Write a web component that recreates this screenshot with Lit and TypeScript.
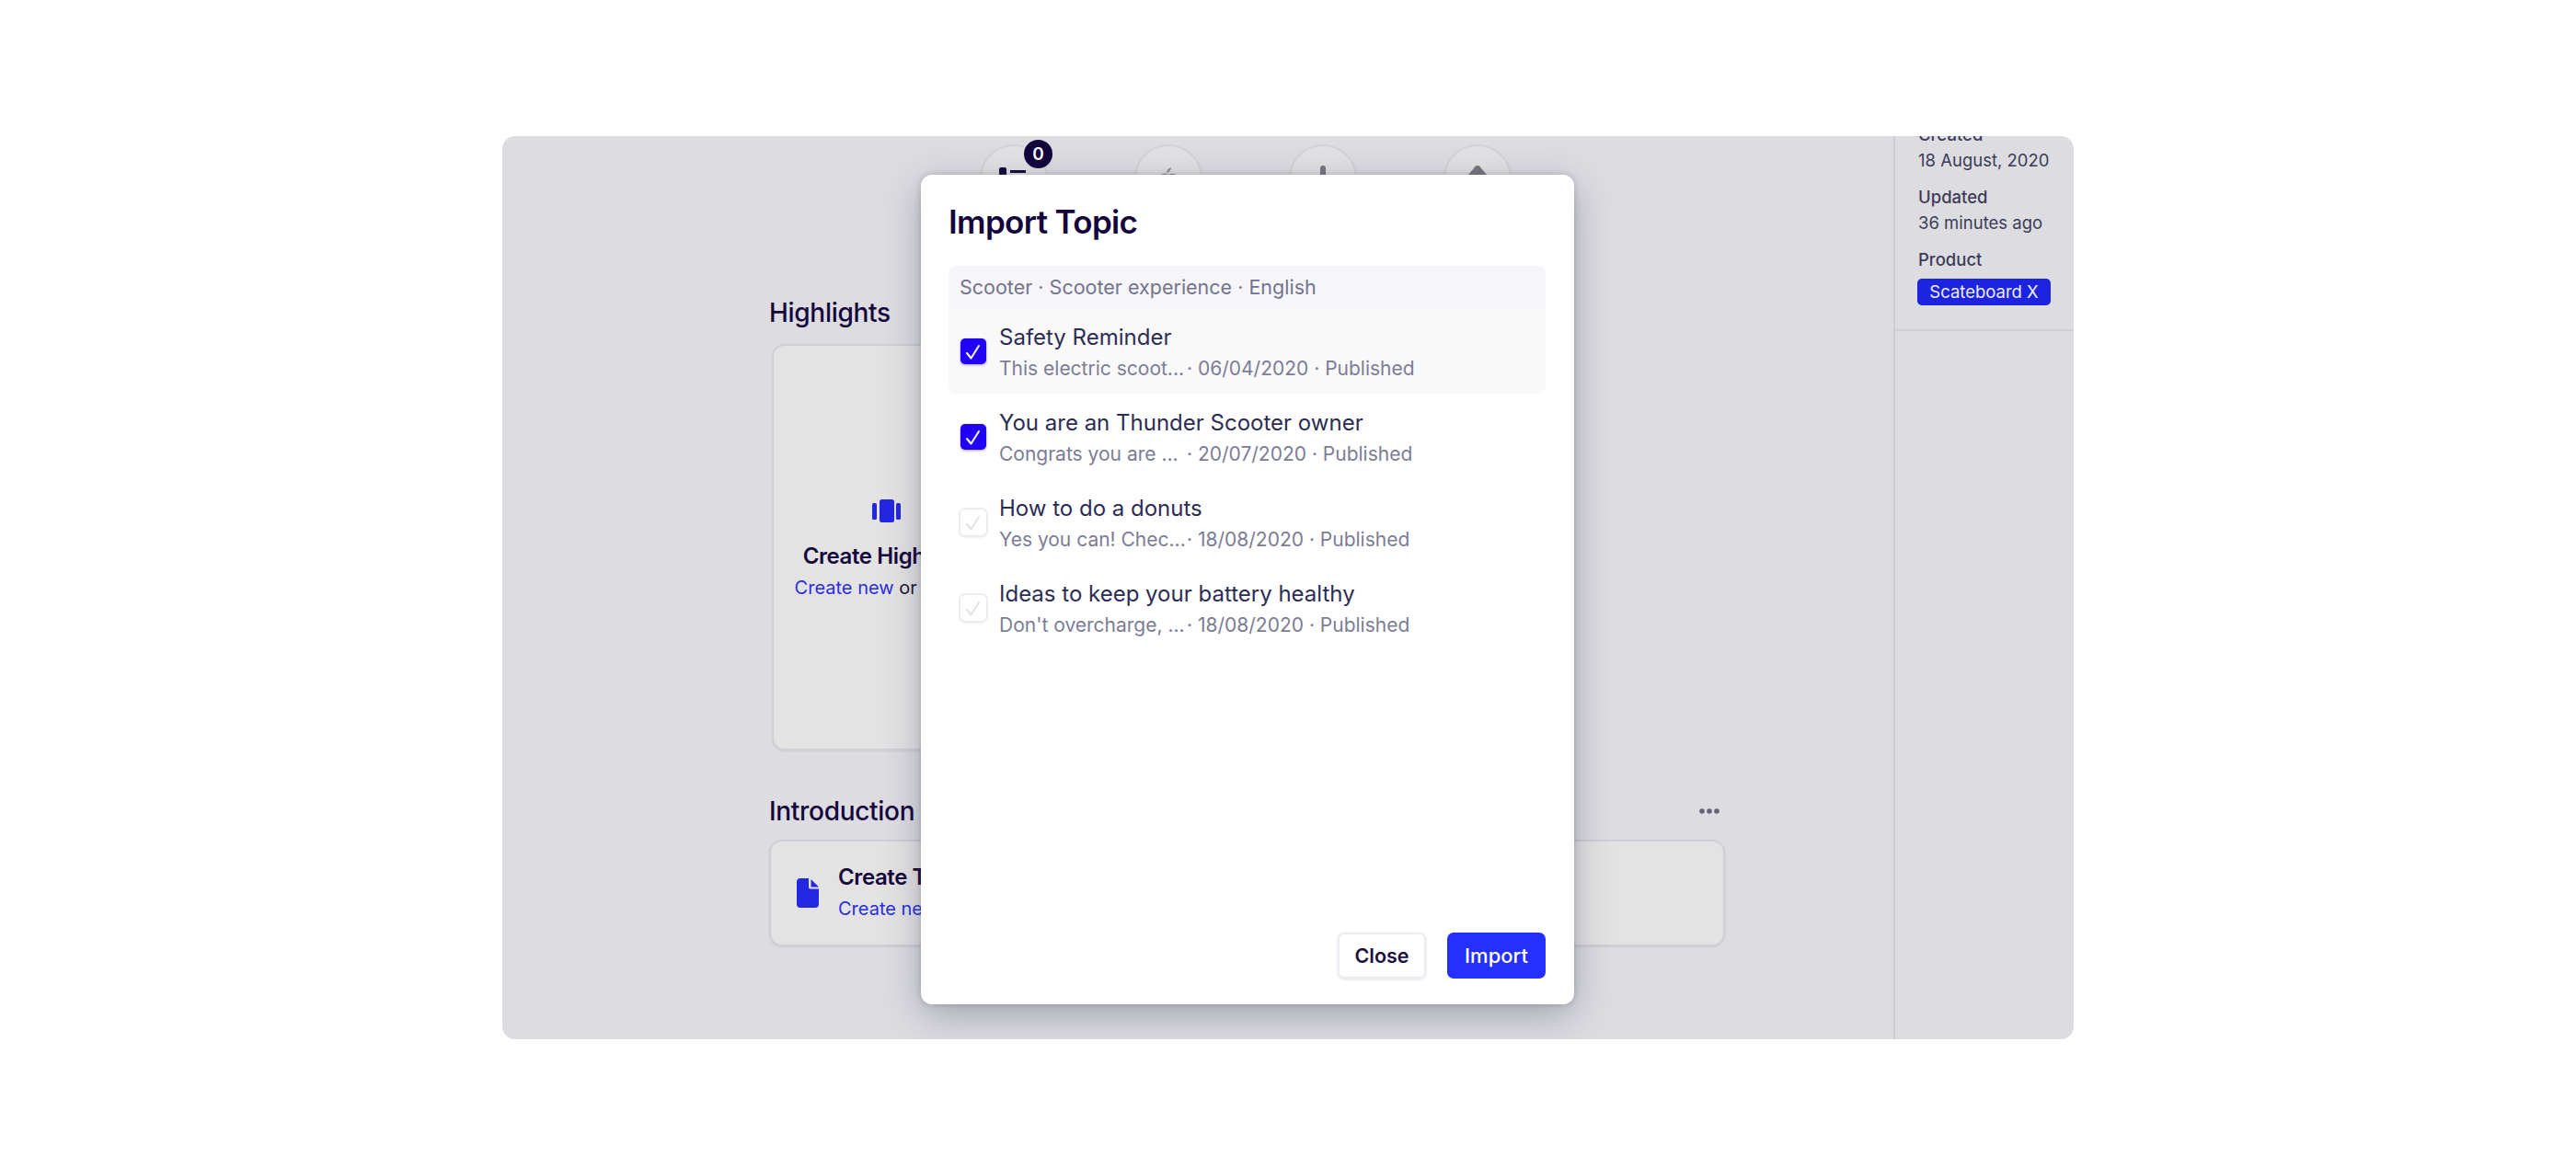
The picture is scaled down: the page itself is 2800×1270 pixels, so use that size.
import { LitElement, html, css } from "lit";
import { customElement } from "lit/decorators.js";

const rows = [
  { t: "Safety Reminder", d: "This electric scoot...", m: "· 06/04/2020 · Published", on: true, hi: true },
  { t: "You are an Thunder Scooter owner", d: "Congrats you are ...", m: "· 20/07/2020 · Published", on: true },
  { t: "How to do a donuts", d: "Yes you can! Chec...", m: "· 18/08/2020 · Published", on: false },
  { t: "Ideas to keep your battery healthy", d: "Don't overcharge, ...", m: "· 18/08/2020 · Published", on: false },
];

@customElement("app-root")
export class AppRoot extends LitElement {
  static styles = css`
    :host { display: block; width: 2800px; height: 1270px; background: #fff; font-family: Inter, "Liberation Sans", sans-serif; overflow: hidden; }
    * { box-sizing: border-box; }
    .page { height: 1270px; padding: 148px 546px 140px; }
    .frame { position: relative; height: 982px; border-radius: 14px; background: #dcdce1; overflow: hidden; display: flex; }
    .main { width: 1512px; flex: none; padding-top: 9px; }
    .tabs { display: flex; gap: 94px; padding-left: 519px; }
    .circle { position: relative; width: 74px; height: 74px; border-radius: 50%; background: #e2e2e4; border: 2px solid #d2d2d8; flex: none; display: flex; justify-content: center; padding-top: 21px; }
    .badge { position: absolute; left: 46px; top: -7px; width: 31px; height: 31px; border-radius: 50%; background: #12043c; color: #fff; font-size: 19px; font-weight: 600; display: flex; align-items: center; justify-content: center; }
    .sec { margin-left: 290px; width: 1039px; }
    .head { display: flex; align-items: center; justify-content: space-between; padding-right: 6px; height: 34px; font-size: 28px; font-weight: 500; color: #14063c; letter-spacing: -0.3px; }
    .hl { margin-top: 92px; }
    .intro { margin-top: 49px; }
    .card { background: #e3e3e4; border: 2px solid #cfcfd6; border-radius: 14px; box-shadow: 0 1px 2px rgba(60,60,90,.1); }
    .hcard { margin: 17px 0 0 3px; width: 249px; height: 442px; display: flex; flex-direction: column; align-items: center; padding-top: 167px; }
    .hicon { margin-bottom: 22px; }
    .icard { margin-top: 14px; height: 116px; display: flex; align-items: center; gap: 21px; padding-left: 28px; }
    .ct { font-size: 24px; line-height: 30px; font-weight: 600; color: #14063c; letter-spacing: -0.4px; white-space: nowrap; }
    .cs { font-size: 20px; line-height: 30px; margin-top: 4px; color: #1a1433; white-space: nowrap; }
    .link { color: #2a2ee0; }
    .side { flex: 1; border-left: 2px solid #cdcdd4; color: #3c3c58; font-size: 18.5px; line-height: 26px; }
    .sidein { margin-top: -15px; padding: 0 0 26px 25px; border-bottom: 2px solid #cdd0d6; }
    .lab { font-weight: 500; margin-top: 14px; }
    .lab.first { margin-top: 0; }
    .val { margin-top: 2px; }
    .pill { margin: 8px 0 0 -1px; width: 145px; height: 29px; line-height: 29px; text-align: center; background: #1c24e0; color: #eef; border-radius: 5px; }
    .modal { position: absolute; left: 455px; top: 42px; width: 710px; height: 902px; background: #fff; border-radius: 12px; box-shadow: 0 0 6px rgba(60,60,90,.25), 0 12px 40px rgba(60,60,90,.35); padding: 26px 31px 28px 30px; display: flex; flex-direction: column; z-index: 3; }
    h2 { margin: 0; font-size: 35px; line-height: 50px; font-weight: 600; color: #14063c; letter-spacing: -0.65px; }
    .sub { margin-top: 23px; height: 46px; background: #f6f6fa; border-radius: 8px 8px 0 0; padding: 0 12px; display: flex; align-items: center; font-size: 21.5px; color: #73738c; }
    .row { height: 93px; display: flex; align-items: center; padding: 4px 13px 0; gap: 14px; border-radius: 0 0 8px 8px; }
    .row.hi { background: #f9f9fa; }
    .cb { width: 28px; height: 28px; border-radius: 5px; flex: none; margin-top: -4px; }
    .cb.on { background: #2100f5; box-shadow: 0 1px 3px rgba(30,0,200,.4); color: #fff; }
    .cb.off { background: #fff; box-shadow: 0 0 0 2px #ececf1, 0 2px 3px rgba(60,60,100,.12); color: #e2e2e8; }
    .tt { font-size: 24px; line-height: 32px; color: #2c2c55; white-space: nowrap; }
    .ms { font-size: 21px; line-height: 30px; margin-top: 3px; color: #7c7c96; display: flex; white-space: nowrap; }
    .ds { width: 204px; flex: none; }
    .foot { margin-top: auto; display: flex; justify-content: flex-end; gap: 23px; }
    .btn { height: 50px; border-radius: 7px; display: flex; align-items: center; justify-content: center; }
    .close { width: 96px; background: #fff; border: 2px solid #ececf2; box-shadow: 0 1px 3px rgba(60,60,100,.15); color: #1c1040; font-size: 21.5px; font-weight: 600; }
    .imp { width: 107px; background: #2430ff; color: #fff; font-size: 22px; font-weight: 500; }
  `;

  check() {
    return html`<svg width="28" height="28" viewBox="0 0 28 28" fill="none" stroke="currentColor" stroke-width="2" stroke-linecap="round" stroke-linejoin="round"><path d="M7 16l4.5 5.500L20 8" /></svg>`;
  }

  render() {
    return html`<div class="page"><div class="frame">
      <div class="main">
        <div class="tabs">
          <div class="circle"><svg width="32" height="28" viewBox="0 0 32 28" fill="#10093a"><rect x="0" y="2" width="8" height="10" rx="2"/><rect x="12" y="5" width="17" height="3"/></svg><div class="badge">0</div></div>
          <div class="circle"><svg width="22" height="30" viewBox="0 0 22 30" fill="#8a8a90"><path d="M9 8c0-3 2-5 5-6 0 3-2 5-5 6z"/><path d="M11 10c3-2 9-2 10 3v12H1V13c1-5 7-5 10-3z"/></svg></div>
          <div class="circle"><svg width="8" height="30" viewBox="0 0 8 30" fill="#77777f"><rect x="1" y="0" width="6" height="30" rx="3"/></svg></div>
          <div class="circle"><svg width="20" height="30" viewBox="0 0 20 30" fill="#77777f"><path d="M10 0c2 0 3 1 4 3l6 7v20H0V10l6-7c1-2 2-3 4-3z"/></svg></div>
        </div>
        <div class="sec hl">
          <div class="head">Highlights</div>
          <div class="card hcard">
            <svg class="hicon" width="31" height="25" viewBox="0 0 31 25" fill="#2327e0"><rect x="0" y="4" width="5" height="18" rx="1.5"/><rect x="8" y="0" width="16" height="25" rx="2.5"/><rect x="26" y="4" width="5" height="18" rx="1.5"/></svg>
            <div class="ct">Create Highlight</div>
            <div class="cs"><span class="link">Create new</span> or import</div>
          </div>
        </div>
        <div class="sec intro">
          <div class="head">Introduction
            <svg width="22" height="6" viewBox="0 0 22 6" fill="#62627a"><circle cx="3" cy="3" r="2.8"/><circle cx="11" cy="3" r="2.8"/><circle cx="19" cy="3" r="2.8"/></svg>
          </div>
          <div class="card icard">
            <svg width="24" height="32" viewBox="0 0 24 32" fill="#2327e0"><path d="M4 0h9v9.500a2 2 0 0 0 2 2h9V28a4 4 0 0 1-4 4H4a4 4 0 0 1-4-4V4a4 4 0 0 1 4-4z"/><path d="M15.500 1L24 9.500h-8.500z"/></svg>
            <div><div class="ct">Create Topic</div><div class="cs"><span class="link">Create new</span></div></div>
          </div>
        </div>
      </div>
      <div class="side"><div class="sidein">
        <div class="lab first">Created</div>
        <div class="val">18 August, 2020</div>
        <div class="lab">Updated</div>
        <div class="val">36 minutes ago</div>
        <div class="lab">Product</div>
        <div class="pill">Scateboard X</div>
      </div></div>
      <div class="modal">
        <h2>Import Topic</h2>
        <div class="sub">Scooter · Scooter experience · English</div>
        ${rows.map(r => html`<div class="row ${r.hi ? "hi" : ""}">
          <div class="cb ${r.on ? "on" : "off"}">${this.check()}</div>
          <div><div class="tt">${r.t}</div><div class="ms"><span class="ds">${r.d}</span><span>${r.m}</span></div></div>
        </div>`)}
        <div class="foot"><div class="btn close">Close</div><div class="btn imp">Import</div></div>
      </div>
    </div></div>`;
  }
}
